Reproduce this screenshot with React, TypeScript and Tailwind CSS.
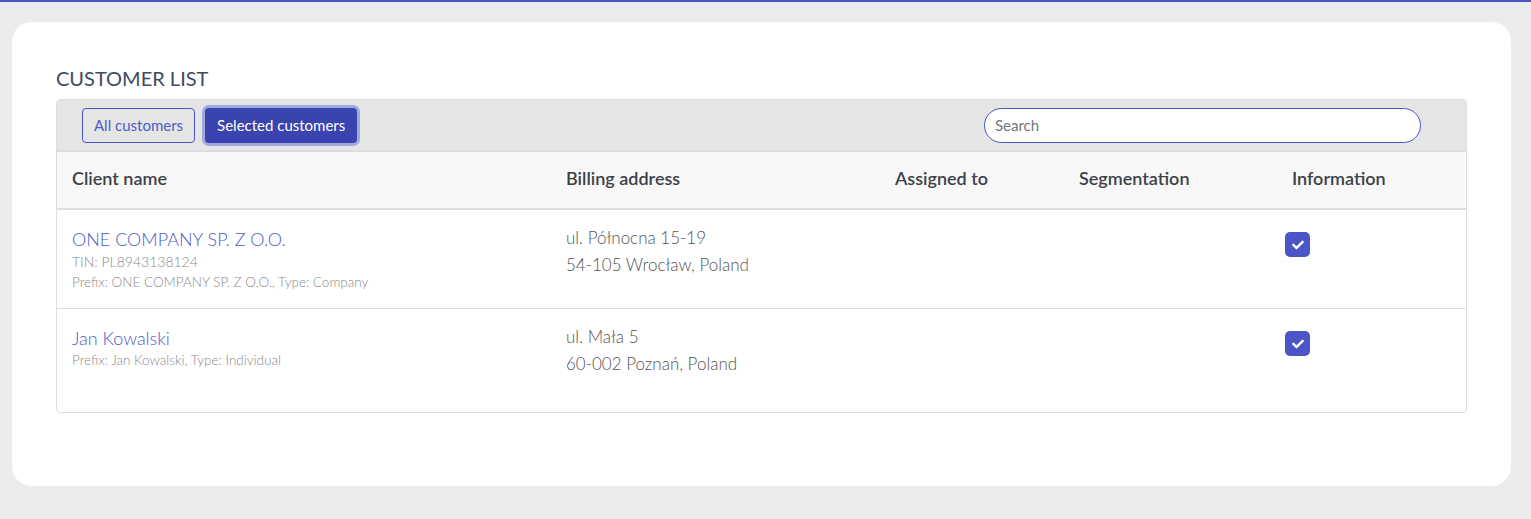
import { FaCheck } from 'react-icons/fa';

interface Customer {
    name: string;
    tin?: string;
    prefix: string;
    street: string;
    city: string;
}

const customers: Customer[] = [
    {
        name: 'ONE COMPANY SP. Z O.O.',
        tin: 'TIN: PL8943138124',
        prefix: 'Prefix: ONE COMPANY SP. Z O.O., Type: Company',
        street: 'ul. Północna 15-19',
        city: '54-105 Wrocław, Poland',
    },
    {
        name: 'Jan Kowalski',
        prefix: 'Prefix: Jan Kowalski, Type: Individual',
        street: 'ul. Mała 5',
        city: '60-002 Poznań, Poland',
    },
];

const cols = 'grid grid-cols-[494px_329px_184px_213px_1fr]';

function CustomerRow({ c, last }: { c: Customer; last: boolean }) {
    return (
        <div className={`${cols} ${last ? 'h-[103px]' : 'h-[99px] border-b border-[#dcdde3]'}`}>
            <div className="pl-[15px] pt-[17px]">
                <div className="text-[18px] font-light leading-[24px] text-[#4f5acb]">{c.name}</div>
                {c.tin && <div className="text-[14px] font-light leading-[21px] text-[#8a8a8a]">{c.tin}</div>}
                <div className="text-[13.5px] font-light leading-[21px] text-[#8a8a8a]">{c.prefix}</div>
            </div>
            <div className="pl-[15px] pt-[14px] text-[17px] font-light leading-[27px] text-[#555]">
                <div>{c.street}</div>
                <div>{c.city}</div>
            </div>
            <div />
            <div />
            <div className="pl-[8px] pt-[22px]">
                <div className="flex h-[25px] w-[25px] items-center justify-center rounded-[5px] bg-[#4b55c7]">
                    <FaCheck className="h-[12px] w-[12px] text-white" />
                </div>
            </div>
        </div>
    );
}

export default function App() {
    return (
        <div className="min-h-[519px] bg-[#ebecee] font-['Lato',sans-serif]">
            <div className="h-[2px] bg-[#4a55c8]" />
            <div className="pl-[12px] pr-[20px] pt-[20px]">
                <div className="h-[464px] rounded-[20px] bg-white px-[44px] pt-[44px]">
                    <h1 className="text-[20px] leading-[24px] text-[#3f4a5e]">CUSTOMER LIST</h1>
                    <div className="mt-[9px] overflow-hidden rounded-[4px] border border-[#dcdde3]">
                        <div className="flex h-[52px] items-center border-b-2 border-[#dcdde3] bg-[#e5e5e5] pl-[25px] pr-[45px]">
                            <button className="h-[35px] rounded-[4px] border border-[#4a55c8] px-[11px] text-[15px] text-[#4f5acb]">
                                All customers
                            </button>
                            <button className="ml-[10px] h-[35px] rounded-[4px] bg-[#3a44b0] px-[12px] text-[15px] text-white ring-[3px] ring-[#a3a8dc]">
                                Selected customers
                            </button>
                            <input
                                placeholder="Search"
                                className="ml-auto h-[35px] w-[437px] rounded-full border border-[#4a55c8] bg-white px-[10px] text-[15px] outline-none placeholder:text-[#777]"
                            />
                        </div>
                        <div className={`${cols} h-[58px] items-center border-b-2 border-[#dcdde3] bg-[#f8f8f8] pb-[3px] text-[18px] font-semibold text-[#3d4148]`}>
                            <div className="pl-[15px]">Client name</div>
                            <div className="pl-[15px]">Billing address</div>
                            <div className="pl-[15px]">Assigned to</div>
                            <div className="pl-[15px]">Segmentation</div>
                            <div className="pl-[15px]">Information</div>
                        </div>
                        {customers.map((c, i) => (
                            <CustomerRow key={c.name} c={c} last={i === customers.length - 1} />
                        ))}
                    </div>
                </div>
            </div>
        </div>
    );
}
